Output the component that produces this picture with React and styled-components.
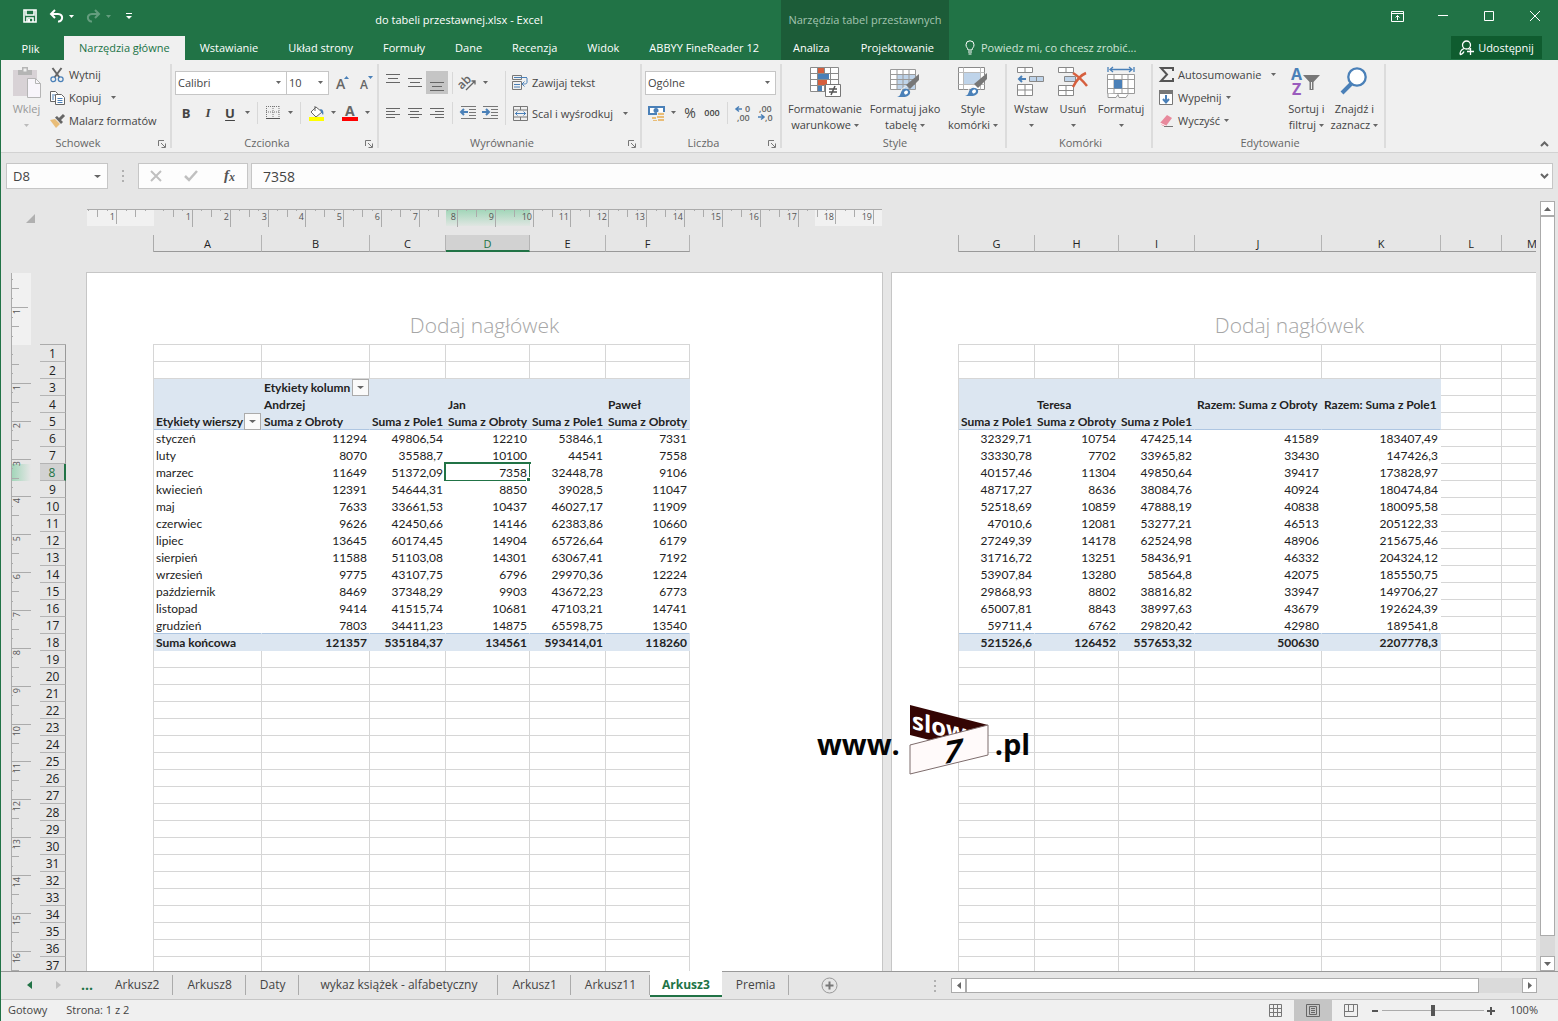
import React, {useState} from "react";
import styled, {createGlobalStyle} from "styled-components";

const GlobalStyle = createGlobalStyle`
  * {
    box-sizing: border-box;
  }

  body {
    margin: 0;
    overflow: hidden;
    font-family: "Open Sans", "Noto Sans", sans-serif;
    font-size: 11px;
    color: #444444;
  }

  button, input, select {
    font: inherit;
    color: inherit;
    margin: 0;
    padding: 0;
    border: none;
    background: none;
    outline: none;
  }

  svg {
    display: block;
    flex: none;
    overflow: visible;
  }
`;

const Window = styled.div`
  display: flex;
  flex-direction: column;
  height: 100vh;
  border-left: 1px solid #217346;
  background: #e6e6e6;
`;

/* ---------- title bar and tabs ---------- */

const Header = styled.header`
  display: flex;
  height: 60px;
  flex: none;
  background: #217346;
  color: #ffffff;
`;

const HeaderMain = styled.div`
  flex: 0 0 780px;
`;

const HeaderContext = styled.div`
  flex: none;
  width: 168px;
  background: #1c5c38;
`;

const HeaderRest = styled.div`
  flex: 1;
`;

const TitleRow = styled.div`
  display: flex;
  align-items: center;
  height: 36px;
  padding-top: 2px;
`;

const QuickAccess = styled.div`
  display: flex;
  align-items: center;
  gap: 6px;
  width: 136px;
  height: 24px;
  padding: 0 0 6px 22px;
`;

const BarButton = styled.button`
  display: flex;
  align-items: center;
  gap: 5px;
  opacity: ${(props) => (props.$dim ? 0.3 : 1)};
`;

const Title = styled.div`
  flex: 1;
  text-align: center;
`;

const ContextTitle = styled(Title)`
  color: #a3c4b0;
`;

const TabRow = styled.nav`
  display: flex;
  height: 24px;
`;

const Tab = styled.button`
  height: 24px;
  padding: 0 15px 2px;
  white-space: nowrap;
  background: ${(props) => (props.$active ? "#f0f0f0" : "transparent")};
  color: ${(props) => (props.$active ? "#217346" : "#ffffff")};
`;

const FileTab = styled(Tab)`
  width: 63px;
  padding: 0 4px 0 0;
`;

const ContextTab = styled(Tab)`
  padding: 0 12px 2px;
  margin-right: 7px;
`;

const WindowButtons = styled.div`
  display: flex;
  justify-content: flex-end;
  height: 36px;
`;

const WindowButton = styled.button`
  display: flex;
  align-items: center;
  justify-content: center;
  width: 46px;
  height: 32px;
`;

const TellRow = styled.div`
  display: flex;
  justify-content: space-between;
  padding: 0 16px;
  height: 24px;
`;

const TellMe = styled.label`
  display: flex;
  align-items: center;
  gap: 6px;
  padding-bottom: 2px;
  color: #cfe3d7;

  input {
    width: 200px;
  }

  input::placeholder {
    color: #cfe3d7;
    opacity: 1;
  }
`;

const Share = styled.button`
  display: flex;
  align-items: center;
  justify-content: center;
  gap: 4px;
  width: 91px;
  height: 23px;
  background: #0f5c2f;
  color: #ffffff;
`;

/* ---------- ribbon ---------- */

const RibbonBar = styled.div`
  display: flex;
  flex: none;
  height: 93px;
  background: #f0f0f0;
  border-bottom: 1px solid #d2d2d2;
`;

const GroupBox = styled.section`
  display: flex;
  flex-direction: column;
  flex: none;
  width: ${(props) => props.$width}px;
  height: 84px;
  margin-top: 4px;
  padding-left: 3px;
  border-right: 2px solid #dcdcdc;
`;

const GroupBody = styled.div`
  display: flex;
  align-items: flex-start;
  flex: 1;
`;

const GroupFoot = styled.div`
  display: flex;
  align-items: center;
  height: 11px;
  color: #666666;
`;

const GroupName = styled.span`
  flex: 1;
  text-align: center;
`;

const LauncherButton = styled.button`
  display: flex;
  justify-content: flex-end;
  width: 18px;
  padding: 2px 4px 0 0;
`;

const RibbonEnd = styled.div`
  display: flex;
  flex: 1;
  align-items: flex-end;
  justify-content: flex-end;
  padding: 0 9px 5px;
`;

const Stack = styled.div`
  display: flex;
  flex-direction: column;
  padding-top: ${(props) => props.$top || 0}px;
  padding-left: ${(props) => props.$left || 0}px;
  padding-right: ${(props) => props.$right || 0}px;
  gap: ${(props) => props.$gap || 0}px;
`;

const Line = styled.div`
  display: flex;
  align-items: center;
  height: 23px;
`;

const BigButton = styled.button`
  display: flex;
  flex-direction: column;
  align-items: center;
  flex: none;
  width: ${(props) => props.$width}px;
  padding-top: 3px;
  line-height: 16px;
  white-space: nowrap;
  color: ${(props) => (props.$dim ? "#999999" : "#444444")};
`;

const BigIcon = styled.span`
  display: flex;
  justify-content: center;
  height: 34px;
`;

const BigLine = styled.span`
  display: flex;
  align-items: center;
  justify-content: center;
  gap: 3px;
  height: 16px;
`;

const SmallButton = styled.button`
  display: flex;
  align-items: center;
  gap: 4px;
  height: 23px;
  padding-bottom: 2px;
  white-space: nowrap;
`;

const IconSlot = styled.span`
  display: flex;
  justify-content: center;
  width: 16px;
`;

const TextGap = styled.span`
  margin-right: ${(props) => props.$gap || 0}px;
`;

const Tool = styled.button`
  display: flex;
  align-items: center;
  justify-content: center;
  width: ${(props) => props.$width || 22}px;
  height: 23px;
  background: ${(props) => (props.$active ? "#c5c5c5" : "transparent")};
`;

const Letter = styled.span`
  font-size: 13px;
  font-weight: ${(props) => (props.$italic ? 600 : 700)};
  font-style: ${(props) => (props.$italic ? "italic" : "normal")};
  font-family: ${(props) => (props.$italic ? '"Liberation Serif", serif' : "inherit")};
  text-decoration: ${(props) => (props.$underline ? "underline" : "none")};
  text-underline-offset: 2px;
`;

const Percent = styled.span`
  font-size: 14px;
`;

const Thousands = styled.span`
  font-size: 9px;
  font-weight: 600;
`;

const Rule = styled.span`
  width: 1px;
  height: ${(props) => props.$height || 22}px;
  margin: 0 4px;
  background: #d8d8d8;
`;

const ComboBox = styled.span`
  display: grid;
  align-items: center;
  width: ${(props) => props.$width}px;
  height: 24px;
  border: 1px solid #c6c6c6;
  background: #ffffff;

  & + & {
    margin-left: -1px;
  }

  select {
    grid-area: 1 / 1;
    height: 22px;
    padding-left: 2px;
    appearance: none;
  }

  svg {
    grid-area: 1 / 1;
    justify-self: end;
    margin-right: 5px;
    pointer-events: none;
  }
`;

/* ---------- formula bar ---------- */

const FormulaBar = styled.div`
  display: flex;
  flex: none;
  height: 48px;
  padding: 10px 5px 12px;
`;

const Field = styled.div`
  display: flex;
  align-items: center;
  width: ${(props) => props.$width}px;
  padding-right: 6px;
  border: 1px solid #c6c6c6;
  background: #fdfdfd;

  input {
    flex: 1;
    min-width: 0;
    padding-left: 6px;
    font-size: ${(props) => (props.$wide ? 14 : 13)}px;
  }
`;

const WideField = styled(Field)`
  flex: 1;
  width: auto;
  margin-left: 3px;
  padding-left: 5px;
  padding-right: 3px;
`;

const Dots = styled.span`
  display: flex;
  flex-direction: column;
  justify-content: center;
  gap: 3px;
  width: ${(props) => props.$width}px;
  align-items: center;

  i {
    width: 2px;
    height: 2px;
    background: #b0b0b0;
  }
`;

const FormulaTools = styled(Field)`
  padding: 0;
  justify-content: space-around;
`;

/* ---------- sheet ---------- */

const SheetArea = styled.main`
  display: grid;
  grid-template-columns: 85px minmax(0, 1fr) 22px;
  grid-template-rows: 71px minmax(0, 1fr);
  flex: 1;
  min-height: 0;
  position: relative;
  overflow: hidden;
`;

const Corner = styled.div`
  padding: 13px 0 0 25px;
`;

const Heads = styled.div`
  display: flex;
  gap: 8px;
  padding-top: 8px;
  overflow: hidden;
`;

const HeadsPage = styled.div`
  flex: 0 0 797px;
`;

const RulerSlot = styled.div`
  height: 26px;
`;

const ColumnHeads = styled.div`
  display: flex;
  height: 17px;
  width: max-content;
  margin-left: 67px;
  border-left: 1px solid #ababab;
`;

const ColumnHead = styled.div`
  width: ${(props) => props.$width}px;
  line-height: 17px;
  text-align: center;
  color: ${(props) => (props.$active ? "#217346" : "#222222")};
  background: ${(props) => (props.$active ? "#d2d2d2" : "transparent")};
  border-right: 1px solid #b4b4b4;
  border-bottom: ${(props) => (props.$active ? "2px solid #217346" : "1px solid #999999")};
`;

const Gutter = styled.div`
  display: flex;
  gap: 9px;
  padding: 1px 0 0 10px;
  overflow: hidden;
`;

const RowHeads = styled.div`
  width: 26px;
  height: max-content;
  margin-top: 71px;
  border-top: 1px solid #ababab;
`;

const RowHead = styled.div`
  height: 17px;
  line-height: 18px;
  font-size: 12px;
  text-align: center;
  color: ${(props) => (props.$active ? "#217346" : "#222222")};
  background: ${(props) => (props.$active ? "#d2d2d2" : "transparent")};
  border-right: ${(props) => (props.$active ? "2px solid #217346" : "1px solid #999999")};
  border-bottom: 1px solid #b4b4b4;
`;

const Pages = styled.div`
  display: flex;
  gap: 8px;
  overflow: hidden;
`;

const Page = styled.div`
  flex: 0 0 797px;
  height: max-content;
  padding-left: 66px;
  background: #ffffff;
  border: 1px solid #c6c6c6;
`;

const PageHeader = styled.div`
  height: 71px;
  margin-left: -66px;
  padding-top: 38px;
  line-height: 28px;
  font-size: 21px;
  font-weight: 300;
  text-align: center;
  color: #a6a6a6;
`;

const Table = styled.table`
  table-layout: fixed;
  width: ${(props) => props.$width}px;
  border-collapse: separate;
  border-spacing: 0;
  border-left: 1px solid #d6d6d6;
  border-top: 1px solid #d6d6d6;
  font-family: Lato, "Open Sans", sans-serif;
  font-size: 12px;
  color: #222222;
`;

const lineColor = (kind) => {
    if (kind === "head") return "#dce6f1";
    if (kind === "body") return "#ffffff";
    return "#d6d6d6";
};

const Cell = styled.td`
  position: relative;
  height: 17px;
  padding: 2px 2px 0;
  line-height: 14px;
  white-space: nowrap;
  text-align: ${(props) => (props.$left ? "left" : "right")};
  font-weight: ${(props) => (props.$kind === "head" ? 700 : 400)};
  background: ${(props) => (props.$kind === "head" ? "#dce6f1" : "#ffffff")};
  border-right: 1px solid ${(props) => lineColor(props.$kind)};
  border-bottom: 1px solid ${(props) => (props.$rule ? "#aec6e2" : lineColor(props.$kind))};
`;

const FilterLabel = styled.div`
  display: flex;
  justify-content: space-between;
  height: 14px;
  margin-right: -2px;
`;

const FilterButton = styled.button`
  display: flex;
  align-items: center;
  justify-content: center;
  width: 17px;
  height: 17px;
  margin-top: -2px;
  border: 1px solid #ababab;
  background: #fafafa;
`;

const Selection = styled.span`
  position: absolute;
  inset: -2px;
  border: 2px solid #217346;

  &::after {
    content: "";
    position: absolute;
    right: -4px;
    bottom: -4px;
    width: 6px;
    height: 6px;
    background: #217346;
    border: 1px solid #ffffff;
    border-right: none;
    border-bottom: none;
  }
`;

const VScroll = styled.div`
  grid-column: 3;
  grid-row: 1 / 3;
  display: flex;
  flex-direction: column;
  width: 15px;
  margin-left: 4px;
  background: #dadada;
`;

const ScrollButton = styled.button`
  display: flex;
  align-items: center;
  justify-content: center;
  flex: none;
  width: 15px;
  height: 15px;
  border: 1px solid #ababab;
  background: #ffffff;
`;

const ScrollThumb = styled.div`
  flex: ${(props) => props.$share};
  border: 1px solid #ababab;
  background: #ffffff;
`;

const ScrollTrack = styled.div`
  flex: ${(props) => props.$share};
`;

/* floats over both pages */
const Watermark = styled.div`
  position: absolute;
  left: 816px;
  top: 503px;
  display: flex;
  align-items: center;
  font-size: 29px;
  font-weight: 700;
  line-height: 40px;
  color: #050505;
  pointer-events: none;

  span {
    padding-top: 8px;
  }

  svg {
    margin: 0 5px 0 9px;
  }
`;

/* ---------- sheet tabs and status bar ---------- */

const SheetBar = styled.div`
  display: flex;
  flex: none;
  height: 29px;
  border-top: 1px solid #999999;
  border-bottom: 1px solid #c6c6c6;
`;

const SheetTabs = styled.div`
  display: flex;
  flex: 1;
  align-items: flex-start;
  min-width: 0;
`;

const SheetNav = styled.div`
  display: flex;
  align-items: center;
  gap: 24px;
  width: 100px;
  height: 26px;
  padding-left: 26px;
`;

const More = styled.button`
  color: #217346;
  font-size: 14px;
  font-weight: 700;
  line-height: 20px;
  margin-left: -4px;
`;

const SheetTab = styled.button`
  height: 26px;
  padding: 0 14px 2px;
  font-size: 12px;
  white-space: nowrap;
  background: linear-gradient(#ababab, #ababab) right 3px / 1px 20px no-repeat;
`;

const WideSheetTab = styled(SheetTab)`
  padding: 0 21px 2px;
`;

const ActiveSheetTab = styled(SheetTab)`
  margin-top: -1px;
  padding: 2px 12px 0;
  font-weight: 700;
  color: #217346;
  background: #ffffff;
  border-bottom: 2px solid #217346;
`;

const AddSheet = styled.button`
  margin: 5px 0 0 32px;
`;

const HScroll = styled.div`
  display: flex;
  align-items: center;
  width: 639px;
  padding-right: 21px;
`;

const HTrack = styled.div`
  display: flex;
  flex: 1;
  height: 15px;
  background: #dadada;
`;

const StatusBar = styled.footer`
  display: flex;
  align-items: center;
  flex: none;
  height: 21px;
  padding-left: 7px;
  gap: 19px;
  background: #f0f0f0;
`;

const StatusText = styled.span`
  padding-bottom: 2px;
`;

const StatusTools = styled.div`
  display: flex;
  align-items: center;
  margin-left: auto;
  padding-right: 20px;
  height: 21px;
`;

const ViewButton = styled.button`
  display: flex;
  align-items: center;
  justify-content: center;
  width: 38px;
  height: 21px;
  background: ${(props) => (props.$active ? "#c5c5c5" : "transparent")};
`;

const ZoomButton = styled.button`
  width: 10px;
  height: 21px;
  display: flex;
  align-items: center;
  justify-content: center;
`;

const ZoomSlider = styled.input`
  width: 102px;
  height: 21px;
  margin: 0 2px;
  appearance: none;
  background: linear-gradient(#ababab, #ababab) center / 100% 1px no-repeat;

  &::-webkit-slider-thumb {
    appearance: none;
    width: 4px;
    height: 11px;
    background: #555555;
  }
`;

const ZoomValue = styled(StatusText)`
  margin-left: 14px;
`;

/* ---------- icons ---------- */

const Icon = ({w = 16, h = 16, children}) => (
    <svg width={w} height={h} viewBox={`0 0 ${w} ${h}`} fill="none" aria-hidden="true">{children}</svg>
);

const Arrow = ({color = "#666666", w = 5}) => (
    <Icon w={w} h={3}><path d={`M0 0h${w}L${w / 2} 3z`} fill={color}/></Icon>
);

const SaveIcon = () => (
    <Icon w={14} h={14}><path d="M1 1h12v12H1zM3 1v5h8V1M4 13V9h6v4" stroke="#fff" strokeWidth="1.6"/>
        <path d="M5 10h2v3H5z" fill="#fff"/></Icon>
);

const UndoIcon = ({flip}) => (
    <Icon w={15} h={14}><g transform={flip ? "matrix(-1 0 0 1 15 0)" : undefined} stroke="#fff" strokeWidth="2">
        <path d="M6 1L2 5l4 4M2 5h7c6 0 5 8 0 7.500"/></g></Icon>
);

const BulbIcon = () => (
    <Icon w={10} h={15}><path d="M3 10C3 8 1 7.500 1 4.800a4 4 0 0 1 8 0C9 7.500 7 8 7 10zM3 12h4M3.500 14h3" stroke="#fff"/></Icon>
);

const ShareIcon = () => (
    <Icon w={15} h={15}>
        <circle cx="7.500" cy="5" r="4" stroke="#fff" strokeWidth="1.300"/>
        <path d="M1 14.500c0-3 1.500-5 4-6M1 14.500c2 0 3-1 4-3M9.500 8.500l1 1M8 11.500h7M11.500 8v7" stroke="#fff" strokeWidth="1.300"/>
    </Icon>
);

const Launcher = () => (
    <Icon w={8} h={8}><path d="M.5 6V.5H6M3 3l4 4M7.500 3.500v4h-4" stroke="#777"/></Icon>
);

const PasteIcon = () => (
    <Icon w={28} h={31}>
        <path d="M0 3h24v26H0z" fill="#d8d2d6"/>
        <path d="M5 8V3h4V0h6v3h4v5z" fill="#b5b5b5"/>
        <path d="M10.500 1.500h3v3h-3z" fill="#f0f0f0"/>
        <path d="M14.500 11.500h8l5 5v14h-13z" fill="#f8f5fb" stroke="#b5b5b5"/>
        <path d="M22.500 11.500v5h5" stroke="#b5b5b5"/>
    </Icon>
);

const CutIcon = () => (
    <Icon w={14}>
        <path d="M2.500 1l7 9.500M11.500 1l-7 9.500" stroke="#666" strokeWidth="2"/>
        <circle cx="3.300" cy="12.300" r="2.400" stroke="#4a80b8" strokeWidth="1.300"/>
        <circle cx="10.700" cy="12.300" r="2.400" stroke="#4a80b8" strokeWidth="1.300"/>
    </Icon>
);

const CopyIcon = () => (
    <Icon w={15} h={14}>
        <path d="M.5 .5h5l2 2v8h-7z" fill="#fff" stroke="#666"/>
        <path d="M5.500 3.500h6l3 3v7h-9z" fill="#fff" stroke="#666"/>
        <path d="M2 4h3M2 6h2M2 8h2M7.500 7.500h5M7.500 9.500h5M7.500 11.500h5" stroke="#4a80b8"/>
    </Icon>
);

const PainterIcon = () => (
    <Icon w={15} h={14}>
        <path d="M0 6l5-1 5 5-4 4z" fill="#e9bd78"/>
        <path d="M5 3.500l2-1.500 6 6-2 2z" fill="#666"/>
        <path d="M9 6l5-5" stroke="#666" strokeWidth="3"/>
    </Icon>
);

const FontSizeIcon = ({down}) => (
    <svg width="16" height="18" viewBox="0 0 16 18" aria-hidden="true">
        <text x="2" y="15" fontSize={down ? 12 : 14} fontWeight="600" fill="#666">A</text>
        <path d={down ? "M10 2h5l-2.500 3z" : "M10 5h5l-2.500-3z"} fill="#4a80b8"/>
    </svg>
);

const BorderIcon = () => (
    <Icon w={14} h={13}><path d="M.5 0v12M7 0v12M13 0v12M0 .5h13M0 6h13" stroke="#777" strokeDasharray="1 1"/>
        <path d="M0 12.500h14" stroke="#555"/></Icon>
);

const FillIcon = () => (
    <Icon w={17}>
        <path d="M3 7l5-5 6 5-6 5z" fill="#fff" stroke="#666"/>
        <path d="M7 6V1" stroke="#666"/>
        <path d="M12 4c3 0 4 3 3 6l-2-3z" fill="#4a80b8"/>
        <path d="M1 12h15v4H1z" fill="#ffff00"/>
    </Icon>
);

const FontColorIcon = () => (
    <svg width="16" height="16" viewBox="0 0 16 16" aria-hidden="true">
        <text x="3" y="11" fontSize="14" fontWeight="700" fill="#666">A</text>
        <path d="M0 12h16v4H0z" fill="#ff0000"/>
    </svg>
);

const AlignIcon = ({lines}) => (
    <Icon w={14} h={18}>
        <path d={lines.map(([x, y, w]) => `M${x} ${y}.5h${w}`).join("")} stroke="#666"/>
    </Icon>
);

const bars = (y, step, kind) => [0, 1, 2, 3].map((i) => {
    const w = i % 2 ? 9 : 14;
    const x = kind === "left" ? 0 : kind === "right" ? 14 - w : Math.floor((14 - w) / 2);
    return [x, y + i * step, w];
});

const OrientIcon = () => (
    <svg width="17" height="17" viewBox="0 0 17 17" aria-hidden="true">
        <text x="-2" y="11" fontSize="12" fontWeight="600" fill="#666" transform="rotate(-45 6 9)">ab</text>
        <path d="M6 16l9-9M11.500 7H15v3.500" stroke="#666" fill="none" strokeWidth="1.300"/>
    </svg>
);

const IndentIcon = ({inward}) => (
    <Icon w={17} h={13}>
        <path d="M1 .5h15M9 3.500h7M9 6.500h7M9 9.500h7M1 12.500h15" stroke="#777"/>
        <path d={inward ? "M0 6h6M4 3l3 3-3 3" : "M2 6h6M4 3L1 6l3 3"} stroke="#4a80b8" strokeWidth="2"/>
    </Icon>
);

const WrapIcon = () => (
    <Icon>
        <path d="M.5 .5h9v4h-9zM.5 6.500h9v8h-9z" stroke="#777"/>
        <path d="M2 2.500h13M2 9.500h6M2 12h6M15 3v4c0 2-1 2-5 2M12.500 6.500L10 9l2.500 2.500" stroke="#4a80b8"/>
    </Icon>
);

const MergeIcon = () => (
    <Icon w={15} h={15}>
        <path d="M.5 .5h14v14H.5zM.5 4h14M.5 11h14M7.500 .5V4M7.500 11v3.500" stroke="#777"/>
        <path d="M2 7.500h11M4.500 5.500l-2 2 2 2M10.500 5.500l2 2-2 2" stroke="#4a80b8"/>
    </Icon>
);

const CurrencyIcon = () => (
    <Icon w={17}>
        <path d="M0 1h17v9H0z" fill="#4a80b8"/>
        <path d="M2 3h13v5H2z" fill="#fff"/>
        <circle cx="8" cy="5.500" r="2.500" fill="#4a80b8"/>
        <path d="M9 7h8v9H9zM4 11h5v5H4z" fill="#f0f0f0"/>
        <path d="M10 8h6v2h-6zM9 11h7v2H9zM4 12h4v2H4zM5 15h4v1H5zM10 14h6v2h-6z" fill="#e9bd78"/>
    </Icon>
);

const DecimalIcon = ({less}) => (
    <svg width="16" height="16" viewBox="0 0 16 16" aria-hidden="true">
        <g fontSize="9" fontWeight="600" fill="#666">
            <text x={less ? 2 : 10} y="7">{less ? ",00" : "0"}</text>
            <text x={less ? 8 : 2} y="16">{less ? ",0" : ",00"}</text>
        </g>
        <path d={less ? "M1 12h6M4 9.500L7 12l-3 2.500" : "M1 4h6M4 1.500L1 4l3 2.500"} stroke="#4a80b8" fill="none" strokeWidth="1.500"/>
    </svg>
);

const Brush = ({x, y}) => (
    <g transform={`translate(${x} ${y})`}>
        <path d="M-1 22c4-1 3-4 5-7 2-2 4-3 6-4l12-12" stroke="#f0f0f0"/>
        <path d="M22-1v6L13 14l-4-4z" fill="#777"/>
        <path d="M0 22c4-1 3-4 5-6.500C7 13 11 13 13 16c1 4-3 6-7 6z" fill="#4a80b8"/>
        <path d="M7 18c0-2 3-4 4-1 0 2-2 2.500-3 2.500z" fill="#fff"/>
    </g>
);

const ConditionalIcon = () => (
    <Icon w={31} h={31}>
        <path d="M.5 .5h28v24H.5z" fill="#fff"/>
        <path d="M.5 .5h28v24H.5zM7.500 .5v24M20.500 .5v18M14.500 .5v24M.5 6.500h28M.5 12.500h28M.5 18.500h28" stroke="#8a8a8a"/>
        <path d="M8 1h6v5H8zM8 13h9v5H8z" fill="#d65f3e"/>
        <path d="M8 7h11v5H8zM8 19h4v5H8z" fill="#4a80b8"/>
        <path d="M15.500 17.500h15v12h-15z" fill="#fff" stroke="#777"/>
        <path d="M19 22h8M19 25h8M25 19l-4 9" stroke="#555" strokeWidth="1.500"/>
    </Icon>
);

const TableFormatIcon = () => (
    <Icon w={31} h={31}>
        <path d="M.5 2.500h25v20H.5z" fill="#fff"/>
        <path d="M7 8h18v14H7z" fill="#bfd4ea"/>
        <path d="M.5 2.500h25v20H.5zM7 2.500v20M13 2.500v20M19 2.500v20M.5 7.500h25M.5 12.500h25M.5 17.500h25" stroke="#9a9a9a"/>
        <Brush x={7} y={8}/>
    </Icon>
);

const CellStyleIcon = () => (
    <Icon w={31} h={31}>
        <path d="M.5 .5h26v22H.5z" fill="#fff" stroke="#8a8a8a"/>
        <path d="M5.500 .5v22M22.500 .5v22M.5 5.500h26M.5 17.500h26" stroke="#bbb"/>
        <path d="M6 6h16v11H6z" fill="#bfd4ea"/>
        <Brush x={7} y={7}/>
    </Icon>
);

const InsertIcon = () => (
    <Icon w={28} h={30}>
        <path d="M.5 .5h15v5H.5zM8 .5v5M.5 17.500h15v11H.5zM8 17.500v11M.5 23h15" fill="#fff" stroke="#888"/>
        <path d="M12.500 9.500h14v5h-14zM19.500 9.500v5" fill="#bfd4ea" stroke="#888"/>
        <path d="M2 12h7M5 9l-3 3 3 3" stroke="#4a80b8" strokeWidth="2"/>
    </Icon>
);

const DeleteIcon = () => (
    <Icon w={30} h={30}>
        <path d="M.5 .5h15v5H.5zM8 .5v5M.5 18.500h15v10H.5zM8 18.500v10M.5 23.500h15" fill="#fff" stroke="#888"/>
        <path d="M6.500 9.500h11v5h-11z" fill="#bfd4ea" stroke="#888"/>
        <path d="M15 6c5 3 10 8 14 13M28 6c-5 2-10 8-13 14" stroke="#d65f3e" strokeWidth="2.500"/>
    </Icon>
);

const FormatIcon = () => (
    <Icon w={29} h={32}>
        <path d="M1 0v5M27 0v5M3 2.500h22M6 0L3 2.500 6 5M22 0l3 2.500L22 5" stroke="#4a80b8" strokeWidth="1.300"/>
        <path d="M.5 7.500h27v19H.5z" fill="#fff"/>
        <path d="M.5 7.500h27v19H.5zM7 7.500v19M15 7.500v19M21 7.500v19M.5 12.500h27M.5 21.500h27" stroke="#999"/>
        <path d="M7 13h8v8.500H7z" fill="#4a80b8"/>
        <path d="M1 26.500v4h8l2-3 1 3h7l2-3" stroke="#999" fill="#fff"/>
    </Icon>
);

const SumIcon = () => (
    <Icon w={15} h={15}><path d="M14 4V1H2l6 6.500L2 14h12v-3" stroke="#555" strokeWidth="2"/></Icon>
);

const FillDownIcon = () => (
    <Icon w={15}><path d="M.5 .5h13v14H.5z" fill="#fff" stroke="#777"/><path d="M0 0h14v4H0z" fill="#777"/>
        <path d="M7 5v7M4 9l3 3.500L10 9" stroke="#4a80b8" strokeWidth="2"/></Icon>
);

const EraserIcon = () => (
    <Icon w={15} h={14}><path d="M1 9l7-8 5 3-6 8H4z" fill="#e8899c"/><path d="M1 9l6 3" stroke="#fff"/>
        <path d="M5 12.500h9" stroke="#777"/></Icon>
);

const SortIcon = () => (
    <svg width="30" height="30" viewBox="0 0 30 30" aria-hidden="true">
        <text x="0" y="13" fontSize="16" fontWeight="700" fill="#4a80b8">A</text>
        <text x="1" y="28" fontSize="16" fontWeight="700" fill="#9a5bbd">Z</text>
        <path d="M12 8h17l-6.500 7v8h-4v-8z" fill="#777"/>
        <path d="M20.500 15v7" stroke="#f0f0f0"/>
    </svg>
);

const FindIcon = () => (
    <Icon w={28} h={30}><circle cx="17" cy="10" r="8.700" fill="#fff" stroke="#4a80b8" strokeWidth="2.300"/>
        <path d="M11 17L2 26" stroke="#4a80b8" strokeWidth="4"/></Icon>
);

const Chevron = ({up}) => (
    <Icon w={9} h={6}><path d={up ? "M1 5l3.500-3.500L8 5" : "M1 1l3.500 3.500L8 1"} stroke="#666" strokeWidth="2"/></Icon>
);

/* ---------- rulers ---------- */

const CM = 37.86;

const HorizontalRuler = () => {
    const ticks = [];
    // quarter-centimetre steps, zero sits on the left page margin
    for (let q = -7; q <= 76; q++) {
        const x = Math.round(68 + q * CM / 4);
        if (x < 1 || x > 795) continue;
        const margin = q < 0 || x > 729;
        const length = q % 4 === 0 ? (margin ? 14 : 17) : q % 2 === 0 ? 7 : 1;
        if (q !== 0) ticks.push(<path key={q} d={`M${x}.5 1v${length}`} stroke="#ababab"/>);
        if (q % 4 === 0 && q !== 0) {
            ticks.push(<text key={`t${q}`} x={x - 1} y="11" textAnchor="end" fontSize="9" fill="#555">{Math.abs(q / 4)}</text>);
        }
    }
    return (<svg width="797" height="18" viewBox="0 0 797 18">
        <defs>
            <linearGradient id="hg" x1="0" y1="0" x2="0" y2="1">
                <stop offset="0" stopColor="#9fd5b7"/>
                <stop offset="1" stopColor="#e0e6e2"/>
            </linearGradient>
        </defs>
        <path d="M1 0h67v17H1zM729 0h67v17h-67z" fill="#f1f1f1"/>
        <path d="M360 0h84v17h-84z" fill="url(#hg)"/>
        <path d="M1 .5h795" stroke="#ababab"/>
        {ticks}
    </svg>);
};

const VerticalRuler = () => {
    const ticks = [];
    for (let q = -7; q <= 120; q++) {
        const y = Math.round(72 + q * CM / 4);
        if (y < 1 || q === 0) continue;
        const length = q % 4 === 0 ? (q < 0 ? 16 : 19) : q % 2 === 0 ? 7 : 1;
        ticks.push(<path key={q} d={`M1 ${y}.5h${length}`} stroke="#ababab"/>);
        if (q % 4 === 0) {
            ticks.push(<text key={`t${q}`} transform={`translate(9 ${y + 2}) rotate(-90)`} textAnchor="end" fontSize="9" fill="#555">{Math.abs(q / 4)}</text>);
        }
    }
    return (<svg width="20" height="1200" viewBox="0 0 20 1200">
        <defs>
            <linearGradient id="vg">
                <stop offset="0" stopColor="#9fd5b7"/>
                <stop offset="1" stopColor="#e6e6e6"/>
            </linearGradient>
        </defs>
        <path d="M0 0h20v72H0z" fill="#f1f1f1"/>
        <path d="M0 191h20v17H0z" fill="url(#vg)"/>
        <path d="M.5 0v1200" stroke="#ababab"/>
        {ticks}
    </svg>);
};

/* ---------- data ---------- */

const ROWS = 44;

const pageOne = {
    columns: [["A", 108], ["B", 108], ["C", 76], ["D", 84], ["E", 76], ["F", 84]],
    pivot: 6,
    rows: {
        3: ["", "Etykiety kolumn", "", "", "", ""],
        4: ["", "Andrzej", "", "Jan", "", "Paweł"],
        5: ["Etykiety wierszy", "Suma z Obroty", "Suma z Pole1", "Suma z Obroty", "Suma z Pole1", "Suma z Obroty"],
        6: ["styczeń", "11294", "49806,54", "12210", "53846,1", "7331"],
        7: ["luty", "8070", "35588,7", "10100", "44541", "7558"],
        8: ["marzec", "11649", "51372,09", "7358", "32448,78", "9106"],
        9: ["kwiecień", "12391", "54644,31", "8850", "39028,5", "11047"],
        10: ["maj", "7633", "33661,53", "10437", "46027,17", "11909"],
        11: ["czerwiec", "9626", "42450,66", "14146", "62383,86", "10660"],
        12: ["lipiec", "13645", "60174,45", "14904", "65726,64", "6179"],
        13: ["sierpień", "11588", "51103,08", "14301", "63067,41", "7192"],
        14: ["wrzesień", "9775", "43107,75", "6796", "29970,36", "12224"],
        15: ["październik", "8469", "37348,29", "9903", "43672,23", "6773"],
        16: ["listopad", "9414", "41515,74", "10681", "47103,21", "14741"],
        17: ["grudzień", "7803", "34411,23", "14875", "65598,75", "13540"],
        18: ["Suma końcowa", "121357", "535184,37", "134561", "593414,01", "118260"],
    },
};

const pageTwo = {
    columns: [["G", 76], ["H", 84], ["I", 76], ["J", 127], ["K", 119], ["L", 61], ["M", 61]],
    pivot: 5,
    rows: {
        4: ["", "Teresa", "", "Razem: Suma z Obroty", "Razem: Suma z Pole1"],
        5: ["Suma z Pole1", "Suma z Obroty", "Suma z Pole1", "", ""],
        6: ["32329,71", "10754", "47425,14", "41589", "183407,49"],
        7: ["33330,78", "7702", "33965,82", "33430", "147426,3"],
        8: ["40157,46", "11304", "49850,64", "39417", "173828,97"],
        9: ["48717,27", "8636", "38084,76", "40924", "180474,84"],
        10: ["52518,69", "10859", "47888,19", "40838", "180095,58"],
        11: ["47010,6", "12081", "53277,21", "46513", "205122,33"],
        12: ["27249,39", "14178", "62524,98", "48906", "215675,46"],
        13: ["31716,72", "13251", "58436,91", "46332", "204324,12"],
        14: ["53907,84", "13280", "58564,8", "42075", "185550,75"],
        15: ["29868,93", "8802", "38816,82", "33947", "149706,27"],
        16: ["65007,81", "8843", "38997,63", "43679", "192624,39"],
        17: ["59711,4", "6762", "29820,42", "42980", "189541,8"],
        18: ["521526,6", "126452", "557653,32", "500630", "2207778,3"],
    },
};

const tabs = ["Wstawianie", "Układ strony", "Formuły", "Dane", "Recenzja", "Widok", "ABBYY FineReader 12"];

const rowNumbers = Array.from({length: ROWS}, (_, i) => i + 1);

/* ---------- pieces ---------- */

const Group = ({label, width, launcher, children}) => (
    <GroupBox $width={width} aria-label={label}>
        <GroupBody>{children}</GroupBody>
        <GroupFoot>
            <GroupName>{label}</GroupName>
            {launcher && <LauncherButton aria-label={`${label} - opcje`}><Launcher/></LauncherButton>}
        </GroupFoot>
    </GroupBox>
);

const Big = ({icon, lines, width, dim}) => (
    <BigButton $width={width} $dim={dim}>
        <BigIcon>{icon}</BigIcon>
        <BigLine>{lines[0]}</BigLine>
        <BigLine>{lines[1]}<Arrow color={dim ? "#bbbbbb" : "#666666"}/></BigLine>
    </BigButton>
);

const Small = ({icon, label, arrow, gap}) => (
    <SmallButton><IconSlot>{icon}</IconSlot><TextGap $gap={gap}>{label}</TextGap>{arrow && <Arrow/>}</SmallButton>
);

const Combo = ({label, width, value}) => (
    <ComboBox $width={width}>
        <select aria-label={label} defaultValue={value}><option>{value}</option></select>
        <Arrow/>
    </ComboBox>
);

const PageColumns = ({page}) => (
    <ColumnHeads>
        {page.columns.map(([name, width]) => <ColumnHead key={name} $width={width} $active={name === "D"}>{name}</ColumnHead>)}
    </ColumnHeads>
);

const cellKind = (page, row, col) => {
    if (col >= page.pivot || row < 3 || row > 18) return "grid";
    return row <= 5 || row === 18 ? "head" : "body";
};

const SheetPage = ({page}) => {
    const width = page.columns.reduce((sum, column) => sum + column[1], 1);

    return (<Page>
        <PageHeader>Dodaj nagłówek</PageHeader>
        <Table $width={width}>
            <colgroup>{page.columns.map(([name, w]) => <col key={name} width={w}/>)}</colgroup>
            <tbody>
            {rowNumbers.map((row) => (
                <tr key={row}>
                    {page.columns.map(([name], col) => {
                        const kind = cellKind(page, row, col);
                        const text = page.rows[row] ? page.rows[row][col] : "";
                        const filter = text && text.startsWith("Etykiety");
                        return (<Cell key={name} $kind={kind} $left={row < 6 || name === "A"}
                                      $rule={col < page.pivot && (row === 5 || row === 17)}>
                            {filter ? <FilterLabel>{text}<FilterButton aria-label={text}><Arrow w={7}/></FilterButton></FilterLabel> : text}
                            {name === "D" && row === 8 && <Selection/>}
                        </Cell>);
                    })}
                </tr>
            ))}
            </tbody>
        </Table>
    </Page>);
};

const Ribbon = () => (
    <RibbonBar>
        <Group label="Schowek" width={171} launcher>
            <Big icon={<PasteIcon/>} lines={["Wklej", ""]} width={45} dim/>
            <Stack>
                <Small icon={<CutIcon/>} label="Wytnij"/>
                <Small icon={<CopyIcon/>} label="Kopiuj" arrow gap={6}/>
                <Small icon={<PainterIcon/>} label="Malarz formatów"/>
            </Stack>
        </Group>
        <Group label="Czcionka" width={207} launcher>
            <Stack $top={7} $gap={7}>
                <Line>
                    <Combo label="Czcionka" width={112} value="Calibri"/>
                    <Combo label="Rozmiar czcionki" width={43} value="10"/>
                    <Tool $width={26}><FontSizeIcon/></Tool>
                    <Tool><FontSizeIcon down/></Tool>
                </Line>
                <Line>
                    <Tool><Letter>B</Letter></Tool>
                    <Tool><Letter $italic>I</Letter></Tool>
                    <Tool><Letter $underline>U</Letter></Tool>
                    <Tool $width={12}><Arrow/></Tool>
                    <Rule/>
                    <Tool><BorderIcon/></Tool>
                    <Tool $width={12}><Arrow/></Tool>
                    <Rule/>
                    <Tool><FillIcon/></Tool>
                    <Tool $width={12}><Arrow/></Tool>
                    <Tool><FontColorIcon/></Tool>
                    <Tool $width={12}><Arrow/></Tool>
                </Line>
            </Stack>
        </Group>
        <Group label="Wyrównanie" width={263} launcher>
            <Stack $top={7} $gap={7}>
                <Line>
                    <Tool><AlignIcon lines={[[0, 0, 14], [2, 4, 10], [0, 8, 14]]}/></Tool>
                    <Tool><AlignIcon lines={[[0, 4, 14], [2, 8, 10], [0, 12, 14]]}/></Tool>
                    <Tool $active><AlignIcon lines={[[0, 8, 14], [2, 12, 10], [0, 16, 14]]}/></Tool>
                    <Rule/>
                    <Tool><OrientIcon/></Tool>
                    <Tool $width={12}><Arrow/></Tool>
                </Line>
                <Line>
                    <Tool><AlignIcon lines={bars(4, 3, "left")}/></Tool>
                    <Tool><AlignIcon lines={bars(4, 3, "center")}/></Tool>
                    <Tool><AlignIcon lines={bars(4, 3, "right")}/></Tool>
                    <Rule/>
                    <Tool><IndentIcon/></Tool>
                    <Tool><IndentIcon inward/></Tool>
                </Line>
            </Stack>
            <Stack $top={7}><Rule $height={54}/></Stack>
            <Stack $top={8} $gap={8} $left={2}>
                <Small icon={<WrapIcon/>} label="Zawijaj tekst"/>
                <Small icon={<MergeIcon/>} label="Scal i wyśrodkuj" arrow gap={6}/>
            </Stack>
        </Group>
        <Group label="Liczba" width={140} launcher>
            <Stack $top={7} $gap={7}>
                <Line><Combo label="Format liczb" width={131} value="Ogólne"/></Line>
                <Line>
                    <Tool><CurrencyIcon/></Tool>
                    <Tool $width={12}><Arrow/></Tool>
                    <Tool><Percent>%</Percent></Tool>
                    <Tool><Thousands>000</Thousands></Tool>
                    <Rule/>
                    <Tool><DecimalIcon/></Tool>
                    <Tool><DecimalIcon less/></Tool>
                </Line>
            </Stack>
        </Group>
        <Group label="Style" width={225}>
            <Big icon={<ConditionalIcon/>} lines={["Formatowanie", "warunkowe"]} width={80}/>
            <Big icon={<TableFormatIcon/>} lines={["Formatuj jako", "tabelę"]} width={80}/>
            <Big icon={<CellStyleIcon/>} lines={["Style", "komórki"]} width={56}/>
        </Group>
        <Group label="Komórki" width={146}>
            <Big icon={<InsertIcon/>} lines={["Wstaw", ""]} width={42}/>
            <Big icon={<DeleteIcon/>} lines={["Usuń", ""]} width={42}/>
            <Big icon={<FormatIcon/>} lines={["Formatuj", ""]} width={54}/>
        </Group>
        <Group label="Edytowanie" width={233}>
            <Stack $left={2} $right={6}>
                <Small icon={<SumIcon/>} label="Autosumowanie" arrow gap={6}/>
                <Small icon={<FillDownIcon/>} label="Wypełnij" arrow/>
                <Small icon={<EraserIcon/>} label="Wyczyść" arrow/>
            </Stack>
            <Big icon={<SortIcon/>} lines={["Sortuj i", "filtruj"]} width={48}/>
            <Big icon={<FindIcon/>} lines={["Znajdź i", "zaznacz"]} width={48}/>
        </Group>
        <RibbonEnd><button aria-label="Zwiń wstążkę"><Chevron up/></button></RibbonEnd>
    </RibbonBar>
);

const Logo = () => (
    <Watermark>
        <span>www.</span>
        <svg width="81" height="72" viewBox="0 0 81 72">
            <path d="M1 1l78 20v30L1 31z" fill="#340503"/>
            <text x="3" y="24" fontSize="24" fontWeight="700" fill="#ffffff" transform="skewY(14)">slow</text>
            <path d="M1 41l78-20v30L1 70z" fill="#fffafa" stroke="#7d6c6c"/>
            <text x="47" y="66" fontSize="31" fontWeight="700" fill="#050505" transform="skewY(-10) skewX(-12)">7</text>
        </svg>
        <span>.pl</span>
    </Watermark>
);

export default function App() {
    const [formula, setFormula] = useState("7358");
    const [zoom, setZoom] = useState(100);

    return (<Window>
        <GlobalStyle/>
        <Header>
            <HeaderMain>
                <TitleRow>
                    <QuickAccess>
                        <BarButton aria-label="Zapisz"><SaveIcon/></BarButton>
                        <span/>
                        <BarButton aria-label="Cofnij"><UndoIcon/><Arrow color="#ffffff"/></BarButton>
                        <span/>
                        <BarButton aria-label="Wykonaj ponownie" $dim><UndoIcon flip/><Arrow color="#ffffff"/></BarButton>
                        <BarButton aria-label="Dostosuj"><Icon w={18} h={7}><path d="M9 .5h6" stroke="#fff"/><path d="M9 3h6l-3 3z" fill="#fff"/></Icon></BarButton>
                    </QuickAccess>
                    <Title>do tabeli przestawnej.xlsx - Excel</Title>
                </TitleRow>
                <TabRow>
                    <FileTab>Plik</FileTab>
                    <Tab $active>Narzędzia główne</Tab>
                    {tabs.map((tab) => <Tab key={tab}>{tab}</Tab>)}
                </TabRow>
            </HeaderMain>
            <HeaderContext>
                <TitleRow><ContextTitle>Narzędzia tabel przestawnych</ContextTitle></TitleRow>
                <TabRow><ContextTab>Analiza</ContextTab><ContextTab>Projektowanie</ContextTab></TabRow>
            </HeaderContext>
            <HeaderRest>
                <WindowButtons>
                    <WindowButton aria-label="Opcje wstążki"><Icon w={13} h={11}><path d="M.5 .5h12v10H.5zM.5 2.500h12M6.500 9V4.500M4.500 6.500l2-2 2 2" stroke="#fff"/></Icon></WindowButton>
                    <WindowButton aria-label="Minimalizuj"><Icon w={10} h={2}><path d="M0 .5h10" stroke="#fff"/></Icon></WindowButton>
                    <WindowButton aria-label="Maksymalizuj"><Icon w={10} h={10}><path d="M.5 .5h9v9h-9z" stroke="#fff"/></Icon></WindowButton>
                    <WindowButton aria-label="Zamknij"><Icon w={10} h={10}><path d="M0 0l10 10M10 0L0 10" stroke="#fff"/></Icon></WindowButton>
                </WindowButtons>
                <TellRow>
                    <TellMe><BulbIcon/><input aria-label="Powiedz mi" placeholder="Powiedz mi, co chcesz zrobić..."/></TellMe>
                    <Share><ShareIcon/>Udostępnij</Share>
                </TellRow>
            </HeaderRest>
        </Header>
        <Ribbon/>
        <FormulaBar>
            <Field $width={102}><input aria-label="Pole nazwy" defaultValue="D8"/><Arrow w={7}/></Field>
            <Dots $width={30}><i/><i/><i/></Dots>
            <FormulaTools $width={110}>
                <button aria-label="Anuluj"><Icon w={12} h={12}><path d="M1 1l10 10M11 1L1 11" stroke="#c0c0c0" strokeWidth="2"/></Icon></button>
                <button aria-label="Wpis"><Icon w={14} h={12}><path d="M1 6l4 4 8-9" stroke="#c0c0c0" strokeWidth="2.500"/></Icon></button>
                <button aria-label="Wstaw funkcję">
                    <svg width="16" height="18" viewBox="0 0 16 18">
                        <g fontFamily="Liberation Serif, serif" fontStyle="italic" fontWeight="700" fill="#555">
                            <text x="4" y="13" fontSize="15">f</text>
                            <text x="9" y="14" fontSize="12">x</text>
                        </g>
                    </svg>
                </button>
            </FormulaTools>
            <WideField $wide>
                <input aria-label="Pasek formuły" value={formula} onChange={(e) => setFormula(e.target.value)}/>
                <Chevron/>
            </WideField>
        </FormulaBar>
        <SheetArea>
            <Corner><Icon w={9} h={9}><path d="M9 0v9H0z" fill="#b0b0b0"/></Icon></Corner>
            <Heads>
                <HeadsPage>
                    <RulerSlot><HorizontalRuler/></RulerSlot>
                    <PageColumns page={pageOne}/>
                </HeadsPage>
                <HeadsPage>
                    <RulerSlot/>
                    <PageColumns page={pageTwo}/>
                </HeadsPage>
            </Heads>
            <Gutter>
                <VerticalRuler/>
                <RowHeads>
                    {rowNumbers.map((row) => <RowHead key={row} $active={row === 8}>{row}</RowHead>)}
                </RowHeads>
            </Gutter>
            <Pages>
                <SheetPage page={pageOne}/>
                <SheetPage page={pageTwo}/>
            </Pages>
            <VScroll>
                <ScrollButton aria-label="W górę"><Icon w={7} h={4}><path d="M0 4h7L3.500 0z" fill="#666"/></Icon></ScrollButton>
                <ScrollThumb $share={36}/>
                <ScrollTrack $share={1}/>
                <ScrollButton aria-label="W dół"><Icon w={7} h={4}><path d="M0 0h7L3.500 4z" fill="#666"/></Icon></ScrollButton>
            </VScroll>
            <Logo/>
        </SheetArea>
        <SheetBar>
            <SheetTabs>
                <SheetNav>
                    <button aria-label="Poprzedni arkusz"><Icon w={5} h={8}><path d="M5 0v8L0 4z" fill="#217346"/></Icon></button>
                    <button aria-label="Następny arkusz"><Icon w={5} h={8}><path d="M0 0v8l5-4z" fill="#c0c0c0"/></Icon></button>
                    <More>...</More>
                </SheetNav>
                <SheetTab>Arkusz2</SheetTab>
                <SheetTab>Arkusz8</SheetTab>
                <SheetTab>Daty</SheetTab>
                <WideSheetTab>wykaz książek - alfabetyczny</WideSheetTab>
                <SheetTab>Arkusz1</SheetTab>
                <SheetTab>Arkusz11</SheetTab>
                <ActiveSheetTab>Arkusz3</ActiveSheetTab>
                <SheetTab>Premia</SheetTab>
                <AddSheet aria-label="Nowy arkusz"><Icon w={17} h={17}><circle cx="8.500" cy="8.500" r="7.500" stroke="#999"/><path d="M8.500 4.500v8M4.500 8.500h8" stroke="#777" strokeWidth="2"/></Icon></AddSheet>
            </SheetTabs>
            <HScroll>
                <Dots $width={32}><i/><i/><i/></Dots>
                <HTrack>
                    <ScrollButton aria-label="W lewo"><Icon w={4} h={7}><path d="M4 0v7L0 3.500z" fill="#666"/></Icon></ScrollButton>
                    <ScrollThumb $share={12}/>
                    <ScrollTrack $share={1}/>
                    <ScrollButton aria-label="W prawo"><Icon w={4} h={7}><path d="M0 0v7l4-3.500z" fill="#666"/></Icon></ScrollButton>
                </HTrack>
            </HScroll>
        </SheetBar>
        <StatusBar>
            <StatusText>Gotowy</StatusText>
            <StatusText>Strona: 1 z 2</StatusText>
            <StatusTools>
                <ViewButton aria-label="Normalny"><Icon w={13} h={13}><path d="M.5 .5h12v12H.5zM4.500 .5v12M8.500 .5v12M.5 4.500h12M.5 8.500h12" stroke="#777"/></Icon></ViewButton>
                <ViewButton $active aria-label="Układ strony"><Icon w={14} h={13}><path d="M.5 .5h13v12H.5zM3.500 2.500h7v8h-7zM5 4.500h4M5 6.500h4M5 8.500h4" stroke="#666"/></Icon></ViewButton>
                <ViewButton aria-label="Podgląd podziału stron"><Icon w={14} h={13}><path d="M.5 .5h13v12H.5zM4.500 .5v7M9.500 .5v7M.5 7.500h9" stroke="#777"/></Icon></ViewButton>
                <ZoomButton aria-label="Pomniejsz"><Icon w={6} h={2}><path d="M0 1h6" stroke="#555" strokeWidth="2"/></Icon></ZoomButton>
                <ZoomSlider type="range" min="0" max="200" value={zoom} aria-label="Powiększenie" onChange={(e) => setZoom(e.target.value)}/>
                <ZoomButton aria-label="Powiększ"><Icon w={8} h={8}><path d="M0 4h8M4 0v8" stroke="#555" strokeWidth="2"/></Icon></ZoomButton>
                <ZoomValue>{zoom}%</ZoomValue>
            </StatusTools>
        </StatusBar>
    </Window>);
}
